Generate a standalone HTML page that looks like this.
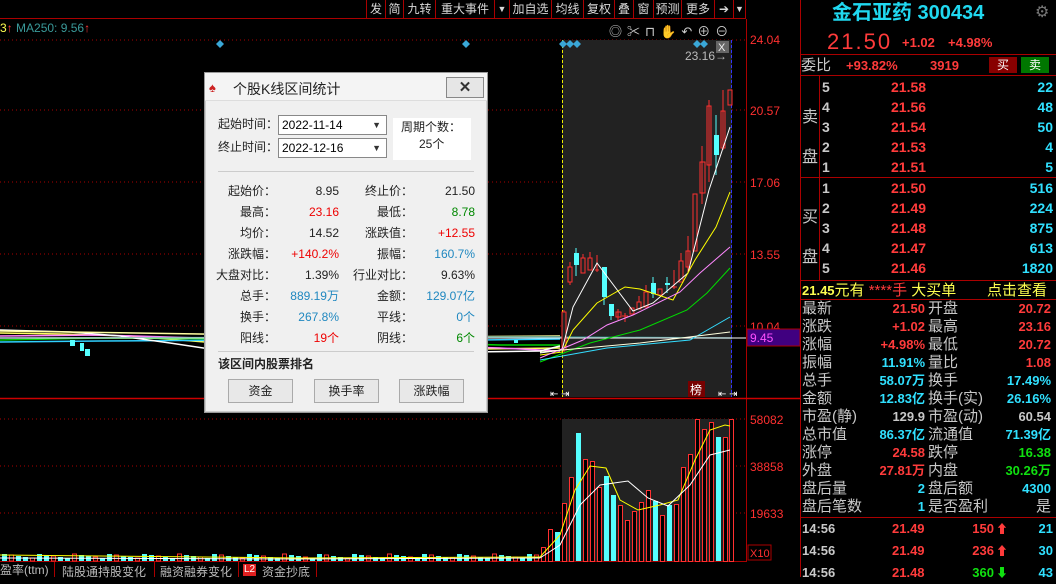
<!DOCTYPE html>
<html><head><meta charset="utf-8"><style>
*{margin:0;padding:0;box-sizing:border-box}
body{width:1056px;height:577px;background:#000;overflow:hidden;position:relative;font-family:"Liberation Sans","Noto Sans CJK SC",sans-serif;color:#c8c8c8}
.a{position:absolute;white-space:nowrap}
.tb{position:absolute;top:0;height:19px;border-left:1px solid #a00;font-size:12px;color:#d8d8d8;line-height:18px;text-align:center}
.r{color:#ff3b3b}.c{color:#30e0ff}.g{color:#10e010}.y{color:#ffff50}.w{color:#c8c8c8}
.rp{font-size:14px;font-weight:bold;line-height:20px}
.st{font-size:15px;line-height:18px}
.dl{font-size:12px;color:#222;line-height:14px}
</style></head><body>
<!-- toolbar -->
<div class="a" style="left:365px;top:18px;width:381px;height:1px;background:#a00"></div>
<div class="a" style="left:0;top:18px;width:366px;height:1px;background:#a00"></div>
<div class="tb" style="left:366px;width:19px">发</div>
<div class="tb" style="left:385px;width:18px">简</div>
<div class="tb" style="left:403px;width:32px">九转</div>
<div class="tb" style="left:435px;width:59px">重大事件</div>
<div class="tb" style="left:494px;width:15px;font-size:9px">▼</div>
<div class="tb" style="left:509px;width:42px">加自选</div>
<div class="tb" style="left:551px;width:32px">均线</div>
<div class="tb" style="left:583px;width:31px">复权</div>
<div class="tb" style="left:614px;width:19px">叠</div>
<div class="tb" style="left:633px;width:20px">窗</div>
<div class="tb" style="left:653px;width:28px">预测</div>
<div class="tb" style="left:681px;width:33px">更多</div>
<div class="tb" style="left:714px;width:19px">➔</div>
<div class="tb" style="left:733px;width:13px;font-size:9px;border-right:1px solid #a00">▼</div>
<div class="a" style="left:0;top:21px;font-size:12px"><span class="y">3</span><span class="r">↑</span> <span style="color:#3a9a9a">MA250: 9.56</span><span class="r">↑</span></div>
<div class="a" style="left:609px;top:21px;font-size:13px;color:#ccc;letter-spacing:5px">◎✂⊓✋↶⊕⊖</div>

<svg class="a" style="left:0;top:0" width="800" height="577">
<g stroke="#a00" stroke-dasharray="1,3" stroke-width="1">
<line x1="0" y1="40" x2="746" y2="40"/><line x1="0" y1="110" x2="746" y2="110"/><line x1="0" y1="182" x2="746" y2="182"/><line x1="0" y1="254" x2="746" y2="254"/><line x1="0" y1="326" x2="746" y2="326"/>
<line x1="0" y1="419" x2="746" y2="419"/><line x1="0" y1="466" x2="746" y2="466"/><line x1="0" y1="513" x2="746" y2="513"/>
</g>
<rect x="562" y="40" width="170" height="357" fill="#222"/>
<rect x="562" y="419" width="170" height="142" fill="#222"/>
<line x1="746.5" y1="19" x2="746.5" y2="562" stroke="#a00"/>
<line x1="0" y1="398.5" x2="800" y2="398.5" stroke="#c00" stroke-width="1.5"/>
<line x1="0" y1="561.5" x2="746" y2="561.5" stroke="#a00"/>
<line x1="562.5" y1="40" x2="562.5" y2="397" stroke="#ee0" stroke-dasharray="3,2"/>
<line x1="731.5" y1="40" x2="731.5" y2="397" stroke="#33f" stroke-dasharray="3,2"/>
<!-- diamonds -->
<g fill="#3aa8d8"><path d="M220 40l4 4-4 4-4-4z"/><path d="M466 40l4 4-4 4-4-4z"/><path d="M563 40l4 4-4 4-4-4z"/><path d="M570 40l4 4-4 4-4-4z"/><path d="M577 40l4 4-4 4-4-4z"/><path d="M697 40l4 4-4 4-4-4z"/><path d="M704 40l4 4-4 4-4-4z"/></g>
<rect x="716" y="41" width="13" height="12" fill="#666"/><text x="718" y="51" font-size="11" fill="#eee">X</text>
<text x="685" y="60" font-size="12" fill="#bbb" font-family="Liberation Sans">23.16→</text>
<!-- left flat MA lines -->
<g fill="none" stroke-width="1.5">
<polyline stroke="#ffff60" points="0,333 60,334 130,336 230,344 300,350 360,353 420,350 480,349 560,348"/>
<polyline stroke="#ff80ff" points="0,336 100,335 200,338 300,342 400,345 500,348 560,351"/>
<polyline stroke="#00d000" points="0,340 100,338 250,339 400,342 500,345 560,345"/>
<polyline stroke="#30d0ff" points="0,342 100,341 250,340 400,341 560,339"/>
<polyline stroke="#fff" points="0,330 70,332 120,336 170,343 230,352 280,358 330,360 400,354 470,352 540,351 560,346"/>
<polyline stroke="#ffffa0" points="0,331 200,334 400,337 560,336"/>
<polyline stroke="#308080" points="0,338 560,337 732,338"/>
</g>
<line x1="0" y1="338" x2="746" y2="338" stroke="#fff"/>
<g fill="#5ff" ><rect x="70" y="340" width="5" height="6"/><rect x="80" y="343" width="4" height="8"/><rect x="85" y="349" width="5" height="7"/><rect x="255" y="341" width="4" height="3"/><rect x="514" y="340" width="4" height="3"/></g>
<!-- candles region -->
<g stroke="#ff3030" fill="none" stroke-width="1">
<line x1="564" y1="310" x2="564" y2="352"/><rect x="562" y="312" width="4" height="38" fill="#222"/>
<line x1="570" y1="262" x2="570" y2="285"/><rect x="568" y="267" width="4" height="15" fill="#222"/>
<rect x="581" y="258" width="4" height="15" fill="#222"/><line x1="583" y1="254" x2="583" y2="258"/>
<rect x="588" y="258" width="4" height="12" fill="#222"/><line x1="590" y1="252" x2="590" y2="258"/>
<line x1="597" y1="255" x2="597" y2="272"/><line x1="595" y1="270" x2="599" y2="270"/>
<rect x="616" y="312" width="5" height="5" fill="#222"/><line x1="618" y1="309" x2="618" y2="320"/>
<line x1="625" y1="313" x2="625" y2="322"/><line x1="622" y1="316" x2="628" y2="316"/>
<rect x="630" y="308" width="4" height="6" fill="#222"/><rect x="637" y="302" width="4" height="7" fill="#222"/><line x1="639" y1="296" x2="639" y2="302"/>
<rect x="644" y="292" width="4" height="15" fill="#222"/><line x1="646" y1="285" x2="646" y2="292"/>
<rect x="658" y="289" width="4" height="6" fill="#222"/>
<line x1="674" y1="270" x2="674" y2="289"/><line x1="671" y1="287" x2="677" y2="287"/>
<rect x="679" y="261" width="4" height="21" fill="#222"/><line x1="681" y1="253" x2="681" y2="261"/>
<rect x="686" y="251" width="4" height="16" fill="#222"/><line x1="688" y1="236" x2="688" y2="272"/>
<rect x="693" y="194" width="4" height="57" fill="#222"/>
<rect x="700" y="162" width="5" height="31" fill="#222"/><line x1="702" y1="146" x2="702" y2="204"/>
<rect x="707" y="106" width="4" height="59" fill="#222"/><line x1="709" y1="100" x2="709" y2="182"/>
<rect x="721" y="111" width="4" height="37" fill="#222"/><line x1="723" y1="90" x2="723" y2="150"/>
<rect x="728" y="90" width="4" height="15" fill="#222"/>
</g>
<g fill="#5ff">
<rect x="574" y="253" width="5" height="12"/><line x1="576" y1="248" x2="576" y2="276" stroke="#5ff"/>
<rect x="602" y="267" width="5" height="30"/><line x1="604" y1="297" x2="604" y2="305" stroke="#5ff"/>
<rect x="609" y="304" width="5" height="12"/><line x1="611" y1="316" x2="611" y2="320" stroke="#5ff"/>
<rect x="651" y="283" width="5" height="11"/><line x1="653" y1="277" x2="653" y2="298" stroke="#5ff"/>
<rect x="665" y="283" width="5" height="2"/><line x1="667" y1="277" x2="667" y2="293" stroke="#5ff"/>
<rect x="714" y="135" width="5" height="20"/><line x1="716" y1="115" x2="716" y2="175" stroke="#5ff"/>
</g>
<g fill="none" stroke-width="1">
<polyline stroke="#fff" points="540,353 562,350 573,307 597,263 633,311 653,303 688,273 709,190 730,127"/>
<polyline stroke="#ff0" points="540,355 562,352 573,330 597,303 625,287 640,289 673,300 695,260 716,227 730,192"/>
<polyline stroke="#f8f" points="540,358 583,340 607,325 633,315 680,292 700,273 730,247"/>
<polyline stroke="#0d0" points="540,362 590,343 640,330 687,310 707,293 730,268"/>
<polyline stroke="#3df" points="540,360 607,348 690,340 730,317"/>
<polyline stroke="#ffd" points="540,352 640,343 730,332"/>
</g>
<rect x="688" y="381" width="17" height="16" fill="#700"/><text x="690" y="394" font-size="12" fill="#fff">榜</text>
<text x="550" y="397" font-size="10" fill="#fff">⇤ ⇥</text><text x="718" y="397" font-size="10" fill="#fff">⇤ ⇥</text>
<!-- axis labels -->
<g font-size="12" fill="#ff3030" font-family="Liberation Sans">
<text x="750" y="44">24.04</text><text x="750" y="115">20.57</text><text x="750" y="187">17.06</text><text x="750" y="259">13.55</text><text x="750" y="331">10.04</text>
<text x="750" y="424">58082</text><text x="750" y="471">38858</text><text x="750" y="518">19633</text>
</g>
<rect x="747" y="329" width="53" height="17" fill="#400080" stroke="#a00"/><text x="750" y="342" font-size="12" fill="#ff50ff">9.45</text>
<rect x="748" y="545" width="23" height="15" fill="none" stroke="#a00"/><text x="750" y="557" font-size="11" fill="#ff3030">X10</text>
<!-- volume -->
<g id="vol" stroke="#ff3030" fill="#000"></g>
<g fill="none" stroke-width="1">
<polyline stroke="#ff0" points="540,557 560,535 575,490 590,466 606,468 620,500 638,510 660,505 678,500 695,460 710,430 725,425 730,426"/>
<polyline stroke="#fff" points="540,558 560,545 580,505 600,485 628,481 648,498 668,506 690,485 710,455 730,450"/>
<polyline stroke="#ff0" points="0,555 100,556 300,558 540,557"/>
<polyline stroke="#fff" points="0,558 300,559 540,558"/>
</g>
</svg>
<script>
(function(){var g=document.getElementById('vol'),s='';
var d=[[541,547,0],[548,529,0],[555,532,1],[562,503,0],[569,477,0],[576,433,1],[583,459,0],[590,461,0],[597,487,0],[604,476,1],[611,495,1],[618,505,0],[625,520,0],[632,511,0],[639,502,0],[646,490,0],[653,501,1],[660,515,0],[667,505,1],[674,504,0],[681,467,0],[688,454,0],[695,419,0],[702,429,0],[709,422,0],[716,437,1],[723,437,0],[729,419,0]];
d.forEach(function(b){s+=b[2]?'<rect x="'+b[0]+'" y="'+b[1]+'" width="5" height="'+(561-b[1])+'" fill="#5ff" stroke="none"/>':'<rect x="'+(b[0]+.5)+'" y="'+(b[1]+.5)+'" width="4" height="'+(561-b[1])+'"/>';});
for(var x=2;x<538;x+=7){var h=3+((x*37)%5);var c=((x*13)%3)==0;s+=c?'<rect x="'+(x+.5)+'" y="'+(561-h)+'" width="4" height="'+h+'"/>':'<rect x="'+x+'" y="'+(561-h)+'" width="5" height="'+h+'" fill="#5ff" stroke="none"/>';}
g.innerHTML=s;})();
</script>
<!-- bottom tabs -->
<div class="a" style="left:0;top:563px;font-size:12px;color:#bbb;line-height:14px">盈率(ttm)</div>
<div class="a" style="left:54px;top:562px;width:1px;height:15px;background:#a00"></div>
<div class="a" style="left:62px;top:563px;font-size:12px;color:#bbb">陆股通持股变化</div>
<div class="a" style="left:154px;top:562px;width:1px;height:15px;background:#a00"></div>
<div class="a" style="left:160px;top:563px;font-size:12px;color:#bbb">融资融券变化</div>
<div class="a" style="left:238px;top:562px;width:1px;height:15px;background:#a00"></div>
<div class="a" style="left:243px;top:564px;width:13px;height:12px;background:#e02020;color:#fff;font-size:10px;text-align:center;line-height:12px">L2</div>
<div class="a" style="left:262px;top:563px;font-size:12px;color:#bbb">资金抄底</div>
<div class="a" style="left:316px;top:562px;width:1px;height:15px;background:#a00"></div>

<!-- dialog -->
<div class="a" style="left:204px;top:72px;width:284px;height:341px;background:#f0f0f0;border:1px solid #999;box-shadow:0 0 0 1px #ccc inset">
 <div class="a" style="left:0;top:0;width:282px;height:28px;background:#f4f4f4;border-bottom:1px solid #ddd"></div>
 <div class="a" style="left:4px;top:7px;width:20px;height:15px;color:#c22;font-size:13px;line-height:15px">♠</div>
 <div class="a" style="left:28px;top:6px;font-size:14px;color:#222">个股K线区间统计</div>
 <div class="a" style="left:241px;top:4px;width:38px;height:21px;border:1px solid #888;background:#e6e6e6;text-align:center;font-size:15px;line-height:19px;color:#333;font-weight:bold">✕</div>
 <div class="a dl" style="left:13px;top:44px">起始时间：</div>
 <div class="a" style="left:73px;top:42px;width:109px;height:20px;background:#fff;border:1px solid #888;font-size:12px;color:#000;padding-left:3px;line-height:18px">2022-11-14<span style="position:absolute;right:5px;font-size:9px;color:#333">▼</span></div>
 <div class="a dl" style="left:13px;top:67px">终止时间：</div>
 <div class="a" style="left:73px;top:65px;width:109px;height:20px;background:#fff;border:1px solid #888;font-size:12px;color:#000;padding-left:3px;line-height:18px">2022-12-16<span style="position:absolute;right:5px;font-size:9px;color:#333">▼</span></div>
 <div class="a" style="left:188px;top:45px;width:78px;height:42px;background:#fff"></div>
 <div class="a dl" style="left:196px;top:47px">周期个数：</div>
 <div class="a dl" style="left:214px;top:64px">25个</div>
 <div class="a" style="left:13px;top:98px;width:256px;height:1px;background:#ccc"></div>
 <div class="a dl" style="left:0;top:108px;width:71px;text-align:right;line-height:21px">起始价：<br>最高：<br>均价：<br>涨跌幅：<br>大盘对比：<br>总手：<br>换手：<br>阳线：</div>
 <div class="a dl" style="left:60px;top:108px;width:74px;text-align:right;line-height:21px"><span>8.95</span><br><span style="color:#e00">23.16</span><br>14.52<br><span style="color:#e00">+140.2%</span><br>1.39%<br><span style="color:#2088c0">889.19万</span><br><span style="color:#2088c0">267.8%</span><br><span style="color:#e00">19个</span></div>
 <div class="a dl" style="left:130px;top:108px;width:78px;text-align:right;line-height:21px">终止价：<br>最低：<br>涨跌值：<br>振幅：<br>行业对比：<br>金额：<br>平线：<br>阴线：</div>
 <div class="a dl" style="left:190px;top:108px;width:80px;text-align:right;line-height:21px">21.50<br><span style="color:#080">8.78</span><br><span style="color:#e00">+12.55</span><br><span style="color:#2088c0">160.7%</span><br>9.63%<br><span style="color:#2088c0">129.07亿</span><br><span style="color:#2088c0">0个</span><br><span style="color:#080">6个</span></div>
 <div class="a" style="left:13px;top:278px;width:256px;height:1px;background:#ccc"></div>
 <div class="a dl" style="left:13px;top:284px;font-weight:bold">该区间内股票排名</div>
 <div class="a dl" style="left:23px;top:306px;width:65px;height:24px;border:1px solid #aaa;background:#e8e8e8;text-align:center;line-height:22px">资金</div>
 <div class="a dl" style="left:109px;top:306px;width:65px;height:24px;border:1px solid #aaa;background:#e8e8e8;text-align:center;line-height:22px">换手率</div>
 <div class="a dl" style="left:194px;top:306px;width:65px;height:24px;border:1px solid #aaa;background:#e8e8e8;text-align:center;line-height:22px">涨跌幅</div>
</div>

<!-- right panel -->
<div class="a" style="left:800px;top:0;width:1px;height:577px;background:#a00"></div>
<div class="a" style="left:832px;top:0;font-size:20px;font-weight:bold;color:#20d8f0;line-height:26px">金石亚药 300434</div>
<div class="a" style="left:1035px;top:2px;font-size:16px;color:#777">⚙</div>
<div class="a r" style="left:827px;top:29px;font-size:22px;line-height:26px;letter-spacing:2px">21.50</div>
<div class="a r" style="left:902px;top:35px;font-size:13px;font-weight:bold">+1.02</div>
<div class="a r" style="left:948px;top:35px;font-size:13px;font-weight:bold">+4.98%</div>
<div class="a" style="left:800px;top:54px;width:256px;height:1px;background:#a00"></div>
<div class="a w" style="left:801px;top:56px;font-size:15px;line-height:20px">委比</div>
<div class="a r rp" style="left:846px;top:56px;font-size:13px">+93.82%</div>
<div class="a r rp" style="left:930px;top:56px;font-size:13px">3919</div>
<div class="a" style="left:989px;top:57px;width:28px;height:16px;background:#800;color:#fff;font-size:12px;text-align:center;line-height:16px">买</div>
<div class="a" style="left:1021px;top:57px;width:28px;height:16px;background:#070;color:#fff;font-size:12px;text-align:center;line-height:16px">卖</div>
<div class="a" style="left:800px;top:75px;width:256px;height:1px;background:#a00"></div>
<div class="a" style="left:800px;top:177px;width:256px;height:1px;background:#a00"></div>
<div class="a" style="left:800px;top:280px;width:256px;height:1px;background:#a00"></div>
<div class="a" style="left:819px;top:75px;width:1px;height:205px;background:#a00"></div>
<div class="a w" style="left:802px;top:98px;font-size:16px;line-height:40px">卖<br>盘</div>
<div class="a w" style="left:802px;top:198px;font-size:16px;line-height:40px">买<br>盘</div>
<div class="a w rp" style="left:822px;top:77px">5<br>4<br>3<br>2<br>1</div>
<div class="a r rp" style="left:891px;top:77px">21.58<br>21.56<br>21.54<br>21.53<br>21.51</div>
<div class="a c rp" style="left:1000px;top:77px;width:53px;text-align:right">22<br>48<br>50<br>4<br>5</div>
<div class="a w rp" style="left:822px;top:178px">1<br>2<br>3<br>4<br>5</div>
<div class="a r rp" style="left:891px;top:178px">21.50<br>21.49<br>21.48<br>21.47<br>21.46</div>
<div class="a c rp" style="left:1000px;top:178px;width:53px;text-align:right">516<br>224<br>875<br>613<br>1820</div>
<div class="a y" style="left:802px;top:281px;font-size:15px;line-height:19px"><b style="font-size:13px">21.45</b>元有 <span class="r">****手</span> 大买单</div>
<div class="a y" style="left:987px;top:281px;font-size:15px;line-height:19px">点击查看</div>
<div class="a" style="left:800px;top:299px;width:256px;height:1px;background:#a00"></div>
<div class="a w st" style="left:802px;top:300px">最新<br>涨跌<br>涨幅<br>振幅<br>总手<br>金额<br>市盈(静)<br>总市值<br>涨停<br>外盘<br>盘后量<br>盘后笔数</div>
<div class="a st" style="left:860px;top:300px;width:65px;text-align:right;font-weight:bold;font-size:13px"><span class="r">21.50</span><br><span class="r">+1.02</span><br><span class="r">+4.98%</span><br><span class="c">11.91%</span><br><span class="c">58.07万</span><br><span class="c">12.83亿</span><br><span class="w">129.9</span><br><span class="c">86.37亿</span><br><span class="r">24.58</span><br><span class="r">27.81万</span><br><span class="c">2</span><br><span class="c">1</span></div>
<div class="a w st" style="left:928px;top:300px">开盘<br>最高<br>最低<br>量比<br>换手<br>换手(实)<br>市盈(动)<br>流通值<br>跌停<br>内盘<br>盘后额<br>是否盈利</div>
<div class="a st" style="left:985px;top:300px;width:66px;text-align:right;font-weight:bold;font-size:13px"><span class="r">20.72</span><br><span class="r">23.16</span><br><span class="r">20.72</span><br><span class="r">1.08</span><br><span class="c">17.49%</span><br><span class="c">26.16%</span><br><span class="w">60.54</span><br><span class="c">71.39亿</span><br><span class="g">16.38</span><br><span class="g">30.26万</span><br><span class="c">4300</span><br><span class="w" style="font-weight:normal;font-size:15px">是</span></div>
<div class="a" style="left:800px;top:517px;width:256px;height:1px;background:#a00"></div>
<div class="a w rp" style="left:802px;top:518px;line-height:22px;font-size:13px">14:56<br>14:56<br>14:56</div>
<div class="a r rp" style="left:892px;top:518px;line-height:22px;font-size:13px">21.49<br>21.49<br>21.48</div>
<div class="a rp" style="left:960px;top:518px;width:34px;text-align:right;line-height:22px;font-size:13px"><span class="r">150</span><br><span class="r">236</span><br><span class="g">360</span></div>
<div class="a rp" style="left:996px;top:518px;line-height:22px;font-size:12px"><span class="r">⬆</span><br><span class="r">⬆</span><br><span class="g">⬇</span></div>
<div class="a c rp" style="left:1020px;top:518px;width:33px;text-align:right;line-height:22px;font-size:13px">21<br>30<br>43</div>
</body></html>
